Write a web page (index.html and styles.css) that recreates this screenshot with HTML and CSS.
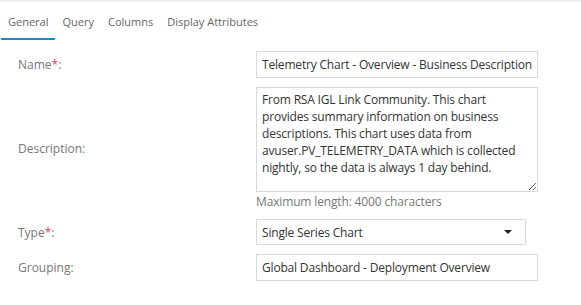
FILE: index.html
```html
<!DOCTYPE html>
<html lang="en">
<head>
    <meta charset="UTF-8">
    <title>Chart Properties</title>
    <link rel="stylesheet" href="styles.css">
</head>
<body>
    <div class="topbar"></div>
    <ul class="tabs">
        <li class="active">General</li>
        <li>Query</li>
        <li>Columns</li>
        <li>Display Attributes</li>
    </ul>

    <form class="props">
        <div class="row">
            <label for="name">Name<span class="req">*</span>:</label>
            <input type="text" id="name" class="field" value="Telemetry Chart - Overview - Business Description">
        </div>
        <div class="row">
            <label for="desc">Description:</label>
            <div>
                <textarea id="desc" class="field area">From RSA IGL Link Community. This chart provides summary information on business descriptions. This chart uses data from avuser.PV_TELEMETRY_DATA which is collected nightly, so the data is always 1 day behind.</textarea>
                <div class="hint">Maximum length: 4000 characters</div>
            </div>
        </div>
        <div class="row">
            <label>Type<span class="req">*</span>:</label>
            <div class="select">
                <span>Single Series Chart</span>
                <span class="caret"></span>
            </div>
        </div>
        <div class="row">
            <label for="group">Grouping:</label>
            <input type="text" id="group" class="field" value="Global Dashboard - Deployment Overview">
        </div>
    </form>
</body>
</html>
```

FILE: styles.css
```css
body {
    margin: 0;
    font-family: "Open Sans", sans-serif;
    font-size: 12px;
    color: #333;
    background: #fff;
}

.topbar {
    height: 2px;
    background-color: #eef0f0;
}

.tabs {
    list-style: none;
    margin: 0;
    padding: 0 0 0 1px;
    display: flex;
}

.tabs li {
    font-size: 11px;
    color: #666;
    padding: 12px 7px 9px 7px;
    border-bottom: 2px solid transparent;
}

.tabs li.active {
    border-bottom-color: #1a8bc8;
}

.props {
    padding-top: 11px;
}

.row {
    display: grid;
    grid-template-columns: 238px 282px;
    align-items: center;
    padding-left: 18px;
    margin-bottom: 9px;
}

.row label {
    color: #777;
}

.req {
    color: #e8424a;
}

.field {
    box-sizing: border-box;
    width: 282px;
    height: 27px;
    margin: 0;
    padding: 0 5px;
    border: 1px solid #d9d9d9;
    font-family: "Open Sans", sans-serif;
    font-size: 12px;
    letter-spacing: -0.18px;
    color: #333;
    outline: none;
}

.area {
    display: block;
    height: 105px;
    padding: 3px 5px;
    line-height: 17px;
    resize: vertical;
}

.hint {
    color: #777;
    padding-top: 1px;
    line-height: 17px;
    letter-spacing: -0.15px;
}

.select {
    box-sizing: border-box;
    width: 270px;
    height: 26px;
    border: 1px solid #d9d9d9;
    padding: 0 5px;
    display: flex;
    align-items: center;
    justify-content: space-between;
    letter-spacing: -0.18px;
}

.caret {
    width: 0;
    height: 0;
    margin-right: 8px;
    border-left: 4px solid transparent;
    border-right: 4px solid transparent;
    border-top: 4px solid #222;
}
```
